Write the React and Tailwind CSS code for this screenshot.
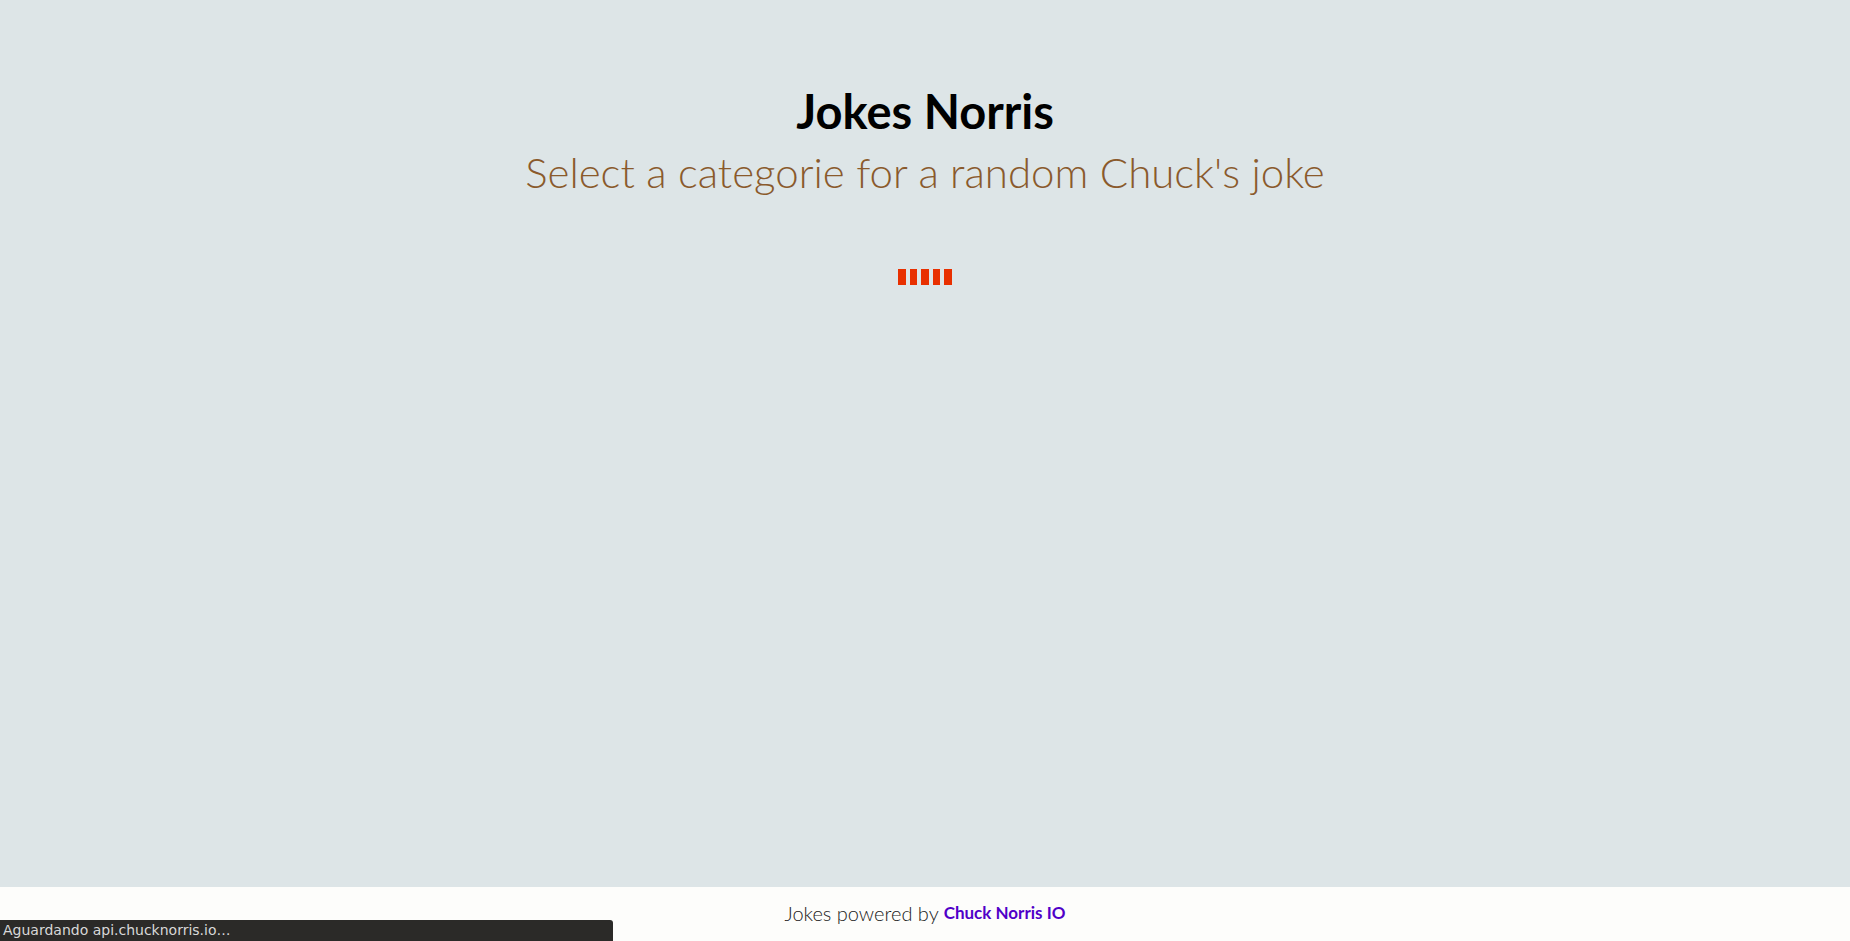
export default function App() {
  return (
    <div className="relative flex min-h-[941px] flex-col" style={{ fontFamily: "Lato, 'Open Sans', sans-serif" }}>
      <main className="flex h-[887px] flex-col items-center bg-[#dde5e7] pt-[87px]">
        <h1 className="text-[47px] font-bold leading-[48px] text-black">Jokes Norris</h1>
        <p className="mt-[13px] text-[42px] font-light leading-[48px] text-[#8a5a2c]">Select a categorie for a random Chuck's joke</p>
        <div className="mt-[73px] flex gap-[4px]">
          <span className="h-[16px] w-[7.5px] bg-[#e83000]" />
          <span className="h-[16px] w-[7.5px] bg-[#e83000]" />
          <span className="h-[16px] w-[7.5px] bg-[#e83000]" />
          <span className="h-[16px] w-[7.5px] bg-[#e83000]" />
          <span className="h-[16px] w-[7.5px] bg-[#e83000]" />
        </div>
      </main>
      <footer className="flex h-[54px] items-center justify-center bg-[#fdfdfb] pb-[2px]">
        <span className="text-[20px] font-light text-[#1a1a1a]">Jokes powered by</span>
        <a className="ml-[5px] text-[17px] font-bold text-[#5000c8]">Chuck Norris IO</a>
      </footer>
      <div className="absolute bottom-0 left-0 flex h-[21px] w-[613px] items-center rounded-tr-[3px] bg-[#2b2a28] pl-[3px] text-[14px] text-[#d8d8d8]" style={{ fontFamily: "'DejaVu Sans', sans-serif" }}>
        Aguardando api.chucknorris.io…
      </div>
    </div>
  );
}
